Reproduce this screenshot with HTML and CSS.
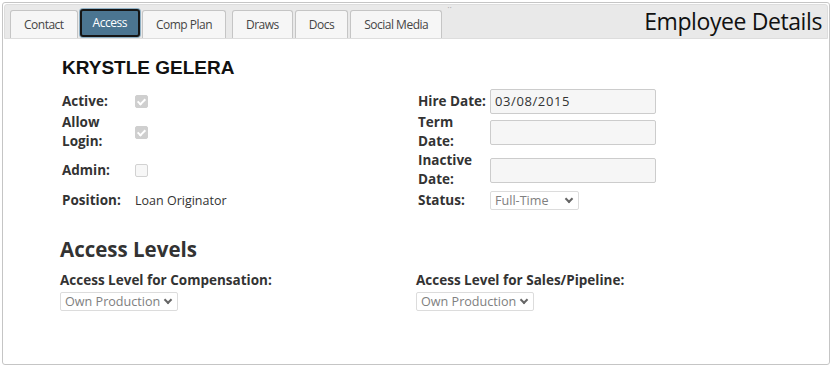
FILE: index.html
```html
<!DOCTYPE html>
<html lang="en">
<head>
    <meta charset="UTF-8">
    <title>Employee Details</title>
    <link rel="stylesheet" href="styles.css">
</head>
<body>
    <div class="tabs">
        <div class="tab-bar">
            <ul class="tab-list">
                <li class="tab">Contact</li>
                <li class="tab active">Access</li>
                <li class="tab">Comp Plan</li>
                <li class="tab spaced">Draws</li>
                <li class="tab">Docs</li>
                <li class="tab">Social Media</li>
                <li class="dots">&middot;&middot;</li>
            </ul>
            <div class="page-title">Employee Details</div>
        </div>

        <div class="panel">
            <h2 class="emp-name">KRYSTLE GELERA</h2>

            <div class="info-grid">
                <label class="lbl">Active:</label>
                <div class="val"><span class="chk checked"></span></div>
                <label class="lbl">Hire Date:</label>
                <div class="val"><input class="txt" type="text" value="03/08/2015"></div>

                <label class="lbl">Allow<br>Login:</label>
                <div class="val"><span class="chk checked"></span></div>
                <label class="lbl">Term<br>Date:</label>
                <div class="val"><input class="txt" type="text"></div>

                <label class="lbl">Admin:</label>
                <div class="val"><span class="chk"></span></div>
                <label class="lbl">Inactive<br>Date:</label>
                <div class="val"><input class="txt" type="text"></div>

                <label class="lbl">Position:</label>
                <div class="val position">Loan Originator</div>
                <label class="lbl">Status:</label>
                <div class="val"><span class="sel status">Full-Time <i class="chev"></i></span></div>
            </div>

            <h3 class="section-title">Access Levels</h3>
            <div class="access-grid">
                <div>
                    <div class="lbl">Access Level for Compensation:</div>
                    <span class="sel">Own Production <i class="chev"></i></span>
                </div>
                <div>
                    <div class="lbl">Access Level for Sales/Pipeline:</div>
                    <span class="sel">Own Production <i class="chev"></i></span>
                </div>
            </div>
        </div>
    </div>
</body>
</html>
```

FILE: styles.css
```css
body {
    margin: 2px;
    font-family: "Open Sans", "DejaVu Sans", sans-serif;
    color: #333;
    background: #fff;
}

.tabs {
    height: 363px;
    border: 1px solid #c5c5c5;
    border-radius: 3px;
    box-sizing: border-box;
    padding: 1px;
}

.tab-bar {
    display: flex;
    justify-content: space-between;
    height: 35px;
    background-color: #e9e9e9;
    border: 1px solid #dddddd;
    border-radius: 3px 3px 0 0;
    box-sizing: border-box;
}

.tab-list {
    display: flex;
    align-items: flex-end;
    list-style: none;
    margin: 0;
    padding: 0 0 0 5px;
}

.tab {
    height: 28px;
    margin-right: 2px;
    padding: 0 13px;
    background-color: #f6f6f6;
    border: 1px solid #c5c5c5;
    border-bottom: none;
    border-radius: 3px 3px 0 0;
    font-size: 12px;
    letter-spacing: -0.5px;
    line-height: 27px;
    color: #454545;
    box-sizing: border-box;
}

.tab.spaced {
    margin-left: 4px;
}

.tab.active {
    background-color: #4b7591;
    border: 2px solid #161616;
    border-radius: 3px;
    color: #fff;
    padding: 0 11px;
    line-height: 24px;
    box-shadow: 0 0 0 1px #8fb0c4;
    margin-left: 0;
    margin-right: 2px;
    margin-bottom: 1px;
}

.dots {
    align-self: flex-start;
    font-size: 9px;
    line-height: 6px;
    color: #aaa;
    margin-left: 3px;
}

.page-title {
    font-size: 23px;
    letter-spacing: -0.4px;
    line-height: 33px;
    color: #111;
    padding-right: 5px;
}

.panel {
    padding: 0 0 0 58px;
}

.emp-name {
    margin: 18px 0 0 0;
    font-family: "Liberation Sans", Arial, sans-serif;
    font-size: 19px;
    line-height: 22px;
    font-weight: bold;
    color: #111;
}

.info-grid {
    display: grid;
    grid-template-columns: 73px 283px 72px 1fr;
    grid-template-rows: 24px 38px 38px 23px;
    align-items: center;
    margin-top: 10px;
}

.lbl {
    font-size: 13.5px;
    font-weight: bold;
    line-height: 19px;
    color: #333;
}

.val {
    display: flex;
    align-items: center;
}

.chk {
    display: inline-block;
    width: 13px;
    height: 13px;
    border: 1px solid #d2d2d2;
    border-radius: 2px;
    background: #f7f7f7;
    box-sizing: border-box;
    position: relative;
}

.chk.checked {
    background: #cfcfcf;
    border-color: #cfcfcf;
}

.chk.checked::after {
    content: "";
    position: absolute;
    left: 3px;
    top: 1px;
    width: 3px;
    height: 6px;
    border: solid #fff;
    border-width: 0 2px 2px 0;
    transform: rotate(45deg);
}

.position {
    font-size: 12.5px;
    color: #333;
}

.txt {
    width: 166px;
    height: 25px;
    margin: 0;
    padding: 0 4px;
    box-sizing: border-box;
    background: #f6f6f6;
    border: 1px solid #cccccc;
    border-radius: 2px;
    font-family: "Open Sans", sans-serif;
    font-size: 13px;
    letter-spacing: 0.6px;
    color: #333;
}

.sel {
    display: inline-flex;
    align-items: center;
    height: 19px;
    padding: 0 4px;
    border: 1px solid #dcdcdc;
    border-radius: 2px;
    box-sizing: border-box;
    font-size: 12.6px;
    color: #808080;
    background: #fff;
    gap: 5px;
}

.sel.status {
    width: 89px;
    justify-content: space-between;
}

.chev {
    display: inline-block;
    width: 4px;
    height: 4px;
    border: solid #666;
    border-width: 0 2px 2px 0;
    transform: rotate(45deg);
    margin: -3px 2px 0 0;
}

.section-title {
    margin: 24px 0 9px -2px;
    font-size: 20.5px;
    line-height: 26px;
    font-weight: bold;
    color: #333;
}

.access-grid {
    display: grid;
    grid-template-columns: 356px 1fr;
    margin-left: -2px;
}

.access-grid .lbl {
    line-height: 18px;
}
```
